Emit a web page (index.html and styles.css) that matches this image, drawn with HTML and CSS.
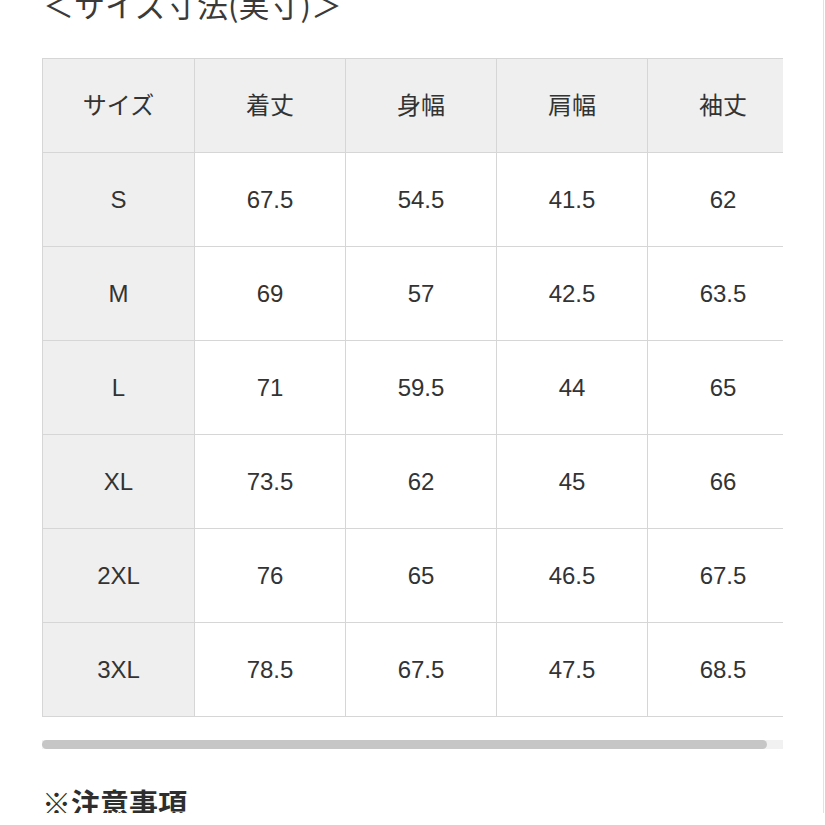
FILE: index.html
```html
<!DOCTYPE html>
<html lang="ja">
<head>
<meta charset="utf-8">
<title>サイズ寸法</title>
<link rel="stylesheet" href="styles.css">
</head>
<body>
<div class="page">
  <h2 class="title">＜サイズ寸法(実寸)＞</h2>
  <div class="scroller">
    <table class="sizes">
      <colgroup>
        <col class="c1"><col class="c"><col class="c"><col class="c"><col class="c">
      </colgroup>
      <tr class="head"><th>サイズ</th><th>着丈</th><th>身幅</th><th>肩幅</th><th>袖丈</th></tr>
      <tr><th>S</th><td>67.5</td><td>54.5</td><td>41.5</td><td>62</td></tr>
      <tr><th>M</th><td>69</td><td>57</td><td>42.5</td><td>63.5</td></tr>
      <tr><th>L</th><td>71</td><td>59.5</td><td>44</td><td>65</td></tr>
      <tr><th>XL</th><td>73.5</td><td>62</td><td>45</td><td>66</td></tr>
      <tr><th>2XL</th><td>76</td><td>65</td><td>46.5</td><td>67.5</td></tr>
      <tr><th>3XL</th><td>78.5</td><td>67.5</td><td>47.5</td><td>68.5</td></tr>
    </table>
  </div>
  <div class="track"><div class="thumb"></div></div>
  <h3 class="notes">※注意事項</h3>
</div>
</body>
</html>
```

FILE: styles.css
```css
html, body {
  margin: 0;
  padding: 0;
  background: #ffffff;
  overflow: hidden;
}
.page {
  width: 781px;
  height: 825px;
  padding-left: 42px;
  border-right: 1px solid #e2e2e2;
  font-family: "Liberation Sans", "Noto Sans CJK JP", sans-serif;
  color: #333333;
}
.title {
  margin: -12px 0 39px 1px;
  font-family: "Noto Sans CJK JP", sans-serif;
  font-size: 31px;
  line-height: 31px;
  font-weight: 400;
  color: #3a3a3a;
  white-space: nowrap;
}
.scroller {
  width: 741px;
  overflow: hidden;
}
.sizes {
  border-collapse: collapse;
  table-layout: fixed;
  width: 756px;
}
.sizes col.c1 { width: 152px; }
.sizes col.c { width: 151px; }
.sizes th, .sizes td {
  border: 1px solid #d6d6d6;
  height: 93px;
  padding: 0;
  text-align: center;
  vertical-align: middle;
  font-size: 24px;
  font-weight: 400;
  color: #333333;
}
.sizes th { background: #efefef; }
.sizes td { background: #ffffff; }
.sizes .head th {
  height: 88px;
  padding-bottom: 5px;
  font-family: "Noto Sans CJK JP", sans-serif;
  font-weight: 400;
  color: #333333;
}
.track {
  margin-top: 23px;
  width: 741px;
  height: 9px;
  background: #f1f1f1;
}
.thumb {
  width: 725px;
  height: 9px;
  border-radius: 5px;
  background: #c6c6c6;
}
.notes {
  margin: 39px 0 0 0;
  font-family: "Noto Sans CJK JP", sans-serif;
  font-size: 29px;
  line-height: 29px;
  font-weight: 700;
  color: #2e2e2e;
}
```
